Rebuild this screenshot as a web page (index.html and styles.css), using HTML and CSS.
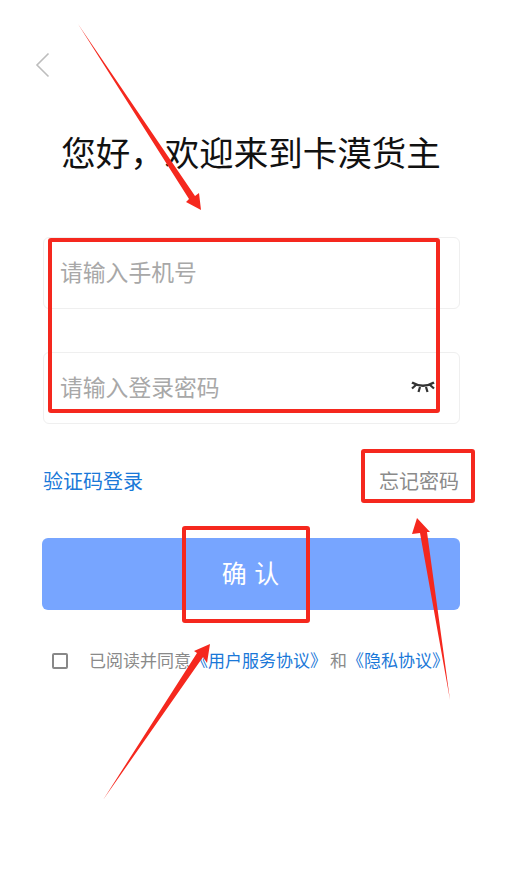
FILE: index.html
```html
<!DOCTYPE html>
<html>
<head>
<meta name="viewport" content="width=device-width, initial-scale=1">
<meta charset="UTF-8">
<link rel="stylesheet" href="styles.css">
</head>
<body>
<div class="page">

  <svg class="back" width="16" height="26" viewBox="0 0 16 26">
    <path d="M13.5 1.5 L2 13 L13.5 24.5" fill="none" stroke="#bdbdbd" stroke-width="1.6"/>
  </svg>

  <h1 class="title">您好，欢迎来到卡漠货主</h1>

  <div class="field">
    <span class="placeholder">请输入手机号</span>
  </div>

  <div class="field field-pwd">
    <span class="placeholder">请输入登录密码</span>
    <svg class="eye" width="24" height="14" viewBox="0 0 24 14">
      <path d="M1 1.5 Q12 8 23 1.5" fill="none" stroke="#333" stroke-width="2.6"/>
      <path d="M1 7.5 L5.5 3.5 M7.5 11 L9 6 M15 6 L16.5 11 M18.5 3.5 L23 7.5" fill="none" stroke="#333" stroke-width="2.2"/>
    </svg>
  </div>

  <div class="links">
    <a class="link-blue">验证码登录</a>
    <a class="link-gray">忘记密码</a>
  </div>

  <button class="confirm">确 认</button>

  <div class="agree">
    <span class="check"></span>
    <span class="agree-text">已阅读并同意<a class="link-doc">《用户服务协议》</a><span class="and">和</span><a class="link-doc">《隐私协议》</a></span>
  </div>

</div>

<!-- red markup drawn over the screenshot -->
<div class="mark mark-fields"></div>
<div class="mark mark-forgot"></div>
<div class="mark mark-confirm"></div>

<svg class="arrows" width="509" height="895" viewBox="0 0 509 895">
  <polygon points="78,24 195,196 199,193 201,210 186,202 189,199" fill="#f5281e"/>
  <polygon points="450,700 427,532 430,532 417,518 412,534 420,533" fill="#f5281e"/>
  <polygon points="103,800 203,657 207,663 210,644 194,651 197,653" fill="#f5281e"/>
</svg>
</body>
</html>
```

FILE: styles.css
```css
body {
  margin: 0;
  background: #fff;
  font-family: "Noto Sans CJK SC", "Noto Sans", sans-serif;
}

.page {
  height: 895px;
  box-sizing: border-box;
  padding: 52px 50px 0 43px;
  display: flex;
  flex-direction: column;
}

.back {
  display: block;
  margin-left: -8px;
}

/* Title */
.title {
  margin: 50px 0 0 0;
  height: 46px;
  line-height: 46px;
  font-size: 34.5px;
  font-weight: 400;
  color: #111;
  text-align: center;
  white-space: nowrap;
}

/* Input rows */
.field {
  height: 72px;
  box-sizing: border-box;
  margin: 63px -1px 0 0;
  padding: 0 24px 0 16px;
  border: 1px solid #efefef;
  border-radius: 6px;
  display: flex;
  align-items: center;
  justify-content: space-between;
}

.field-pwd {
  margin-top: 43px;
}

.placeholder {
  font-size: 22.8px;
  line-height: 66px;
  margin-bottom: 2px;
  color: #a8a8a8;
}

.links {
  margin-top: 36px;
  height: 40px;
  display: flex;
  align-items: center;
  justify-content: space-between;
  font-size: 20px;
}

.link-blue {
  color: #1a78d8;
}

.link-gray {
  color: #8a8a8a;
}

.confirm {
  margin: 38px -1px 0 -1px;
  height: 72px;
  padding-bottom: 5px;
  background-color: #77a5ff;
  color: #fff;
  border: 0;
  border-radius: 6px;
  font-family: inherit;
  font-size: 25px;
  letter-spacing: 1px;
}

/* Agreement line */
.agree {
  margin-top: 37px;
  display: flex;
  align-items: center;
  height: 25px;
  white-space: nowrap;
}

.check {
  width: 12px;
  height: 12px;
  margin-left: 9px;
  margin-top: 2px;
  border: 2px solid #888;
  border-radius: 2px;
}

.agree-text {
  margin-left: 21px;
  font-size: 17px;
  color: #8a8a8a;
}

.link-doc {
  color: #1a78d8;
}

.and {
  margin: 0 0 0 3px;
}

/* Red markup */
.mark {
  position: absolute;
  box-sizing: border-box;
  border: 4px solid #f5281e;
  border-radius: 3px;
}

.mark-fields {
  left: 48px;
  top: 238px;
  width: 392px;
  height: 175px;
}

.mark-forgot {
  left: 361px;
  top: 449px;
  width: 114px;
  height: 54px;
}

.mark-confirm {
  left: 182px;
  top: 526px;
  width: 128px;
  height: 97px;
}

.arrows {
  position: absolute;
  left: 0;
  top: 0;
}
```
